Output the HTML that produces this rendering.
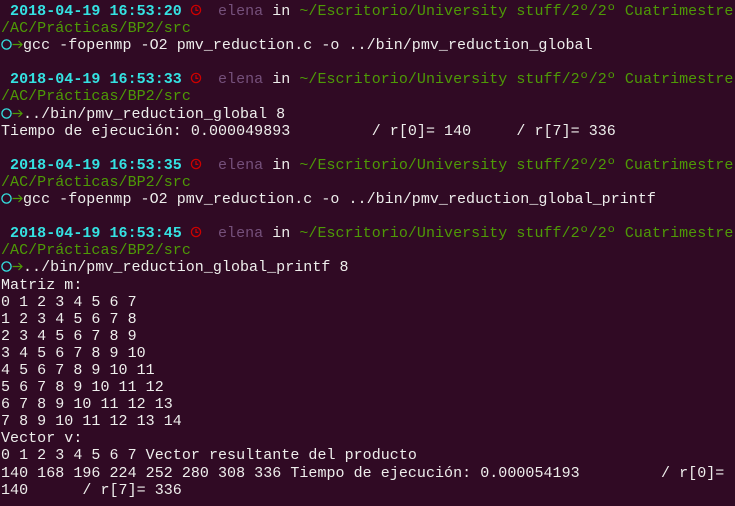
<!DOCTYPE html>
<html><head><meta charset="utf-8"><style>
html,body{margin:0;padding:0;background:#300a24;width:735px;height:506px;overflow:hidden}
pre{margin:0;padding:3px 0 0 1px;font-family:"Liberation Mono",monospace;font-size:15px;line-height:17.1px;color:#eeeeec;white-space:pre;letter-spacing:0.04px}
.d{color:#34e2e2;font-weight:bold}
.u{color:#75507b}
.g{color:#4e9a06}
.i{display:inline-block;width:9px;height:14px;vertical-align:-2px}
.p{display:inline-block;width:11px;height:14px;vertical-align:-2px}
</style></head><body><pre><span class="d"> 2018-04-19 16:53:20</span> <svg class="i" viewBox="0 0 9 14" overflow="visible"><circle cx="5" cy="7" r="4.6" fill="none" stroke="#cc0000" stroke-width="1.3"/><path d="M5 4V7.4H7.3" fill="none" stroke="#cc0000" stroke-width="1.2"/></svg>  <span class="u">elena</span> in <span class="g">~/Escritorio/University stuff/2º/2º Cuatrimestre</span>
<span class="g">/AC/Prácticas/BP2/src</span>
<svg class="p" viewBox="0 0 11 14"><circle cx="5.5" cy="7.5" r="4.6" fill="none" stroke="#34e2e2" stroke-width="1.3"/></svg><svg class="p" viewBox="0 0 11 14"><path d="M0.5 7.5H10M6.5 4L10 7.5L6.5 11" fill="none" stroke="#4e9a06" stroke-width="1.2"/></svg>gcc -fopenmp -O2 pmv_reduction.c -o ../bin/pmv_reduction_global

<span class="d"> 2018-04-19 16:53:33</span> <svg class="i" viewBox="0 0 9 14" overflow="visible"><circle cx="5" cy="7" r="4.6" fill="none" stroke="#cc0000" stroke-width="1.3"/><path d="M5 4V7.4H7.3" fill="none" stroke="#cc0000" stroke-width="1.2"/></svg>  <span class="u">elena</span> in <span class="g">~/Escritorio/University stuff/2º/2º Cuatrimestre</span>
<span class="g">/AC/Prácticas/BP2/src</span>
<svg class="p" viewBox="0 0 11 14"><circle cx="5.5" cy="7.5" r="4.6" fill="none" stroke="#34e2e2" stroke-width="1.3"/></svg><svg class="p" viewBox="0 0 11 14"><path d="M0.5 7.5H10M6.5 4L10 7.5L6.5 11" fill="none" stroke="#4e9a06" stroke-width="1.2"/></svg>../bin/pmv_reduction_global 8
Tiempo de ejecución: 0.000049893         / r[0]= 140     / r[7]= 336

<span class="d"> 2018-04-19 16:53:35</span> <svg class="i" viewBox="0 0 9 14" overflow="visible"><circle cx="5" cy="7" r="4.6" fill="none" stroke="#cc0000" stroke-width="1.3"/><path d="M5 4V7.4H7.3" fill="none" stroke="#cc0000" stroke-width="1.2"/></svg>  <span class="u">elena</span> in <span class="g">~/Escritorio/University stuff/2º/2º Cuatrimestre</span>
<span class="g">/AC/Prácticas/BP2/src</span>
<svg class="p" viewBox="0 0 11 14"><circle cx="5.5" cy="7.5" r="4.6" fill="none" stroke="#34e2e2" stroke-width="1.3"/></svg><svg class="p" viewBox="0 0 11 14"><path d="M0.5 7.5H10M6.5 4L10 7.5L6.5 11" fill="none" stroke="#4e9a06" stroke-width="1.2"/></svg>gcc -fopenmp -O2 pmv_reduction.c -o ../bin/pmv_reduction_global_printf

<span class="d"> 2018-04-19 16:53:45</span> <svg class="i" viewBox="0 0 9 14" overflow="visible"><circle cx="5" cy="7" r="4.6" fill="none" stroke="#cc0000" stroke-width="1.3"/><path d="M5 4V7.4H7.3" fill="none" stroke="#cc0000" stroke-width="1.2"/></svg>  <span class="u">elena</span> in <span class="g">~/Escritorio/University stuff/2º/2º Cuatrimestre</span>
<span class="g">/AC/Prácticas/BP2/src</span>
<svg class="p" viewBox="0 0 11 14"><circle cx="5.5" cy="7.5" r="4.6" fill="none" stroke="#34e2e2" stroke-width="1.3"/></svg><svg class="p" viewBox="0 0 11 14"><path d="M0.5 7.5H10M6.5 4L10 7.5L6.5 11" fill="none" stroke="#4e9a06" stroke-width="1.2"/></svg>../bin/pmv_reduction_global_printf 8
Matriz m:
0 1 2 3 4 5 6 7
1 2 3 4 5 6 7 8
2 3 4 5 6 7 8 9
3 4 5 6 7 8 9 10
4 5 6 7 8 9 10 11
5 6 7 8 9 10 11 12
6 7 8 9 10 11 12 13
7 8 9 10 11 12 13 14
Vector v:
0 1 2 3 4 5 6 7 Vector resultante del producto
140 168 196 224 252 280 308 336 Tiempo de ejecución: 0.000054193         / r[0]=
140      / r[7]= 336</pre></body></html>
